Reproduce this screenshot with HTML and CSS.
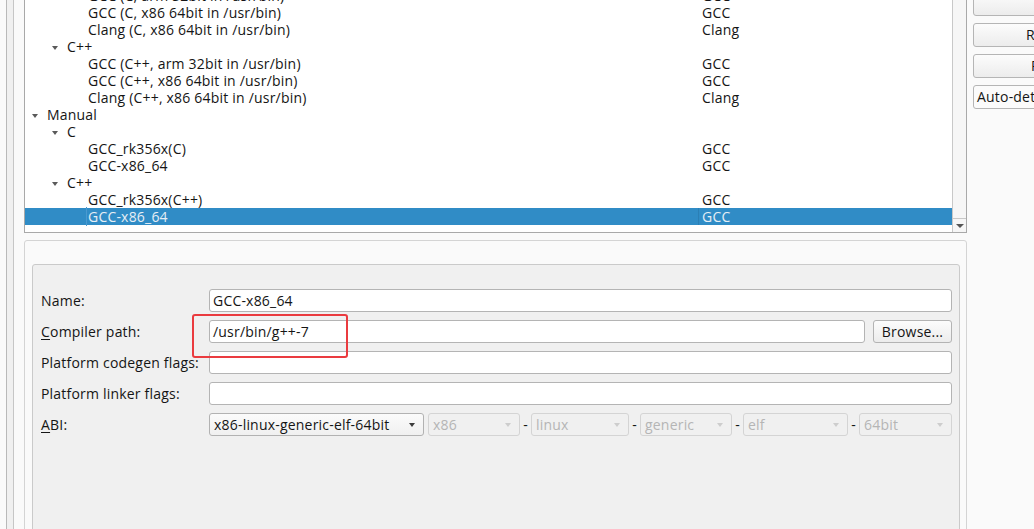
FILE: index.html
```html
<!DOCTYPE html>
<html>
<head>
<meta charset="utf-8">
<link rel="stylesheet" href="styles.css">
</head>
<body>
<div class="shell">
  <div class="edge"></div>
  <div class="main">
    <div class="tree">
      <div class="tree-body">
        <div class="row"><div class="name lvl2">GCC (C, arm 32bit in /usr/bin)</div><div class="type">GCC</div></div>
        <div class="row"><div class="name lvl2">GCC (C, x86 64bit in /usr/bin)</div><div class="type">GCC</div></div>
        <div class="row"><div class="name lvl2">Clang (C, x86 64bit in /usr/bin)</div><div class="type">Clang</div></div>
        <div class="row"><div class="name lvl1"><span class="twisty"></span>C++</div><div class="type"></div></div>
        <div class="row"><div class="name lvl2">GCC (C++, arm 32bit in /usr/bin)</div><div class="type">GCC</div></div>
        <div class="row"><div class="name lvl2">GCC (C++, x86 64bit in /usr/bin)</div><div class="type">GCC</div></div>
        <div class="row"><div class="name lvl2">Clang (C++, x86 64bit in /usr/bin)</div><div class="type">Clang</div></div>
        <div class="row"><div class="name lvl0"><span class="twisty"></span>Manual</div><div class="type"></div></div>
        <div class="row"><div class="name lvl1"><span class="twisty"></span>C</div><div class="type"></div></div>
        <div class="row"><div class="name lvl2">GCC_rk356x(C)</div><div class="type">GCC</div></div>
        <div class="row"><div class="name lvl2">GCC-x86_64</div><div class="type">GCC</div></div>
        <div class="row"><div class="name lvl1"><span class="twisty"></span>C++</div><div class="type"></div></div>
        <div class="row"><div class="name lvl2">GCC_rk356x(C++)</div><div class="type">GCC</div></div>
        <div class="row selected"><div class="name lvl2"><span class="focus">GCC-x86_64</span></div><div class="type">GCC</div></div>
      </div>
      <div class="scrollbar">
        <div class="sb-btn"><span class="sb-arrow"></span></div>
      </div>
    </div>

    <div class="details">
      <div class="group">
        <div class="form">
          <div class="label">Name:</div>
          <div class="field">GCC-x86_64</div>

          <div class="label"><span class="mn">C</span>ompiler path:</div>
          <div class="path-row">
            <div class="field grow">/usr/bin/g++-7</div>
            <div class="btn">Browse...</div>
          </div>

          <div class="label">Platform codegen flags:</div>
          <div class="field"></div>

          <div class="label">Platform linker flags:</div>
          <div class="field"></div>

          <div class="label"><span class="mn">A</span>BI:</div>
          <div class="abi-row">
            <div class="combo w-main"><span>x86-linux-generic-elf-64bit</span><span class="caret"></span></div>
            <div class="combo disabled w-arch"><span>x86</span><span class="caret"></span></div>
            <span class="dash">-</span>
            <div class="combo disabled w-os"><span>linux</span><span class="caret"></span></div>
            <span class="dash">-</span>
            <div class="combo disabled w-flavor"><span>generic</span><span class="caret"></span></div>
            <span class="dash">-</span>
            <div class="combo disabled w-format"><span>elf</span><span class="caret"></span></div>
            <span class="dash">-</span>
            <div class="combo disabled w-width"><span>64bit</span><span class="caret"></span></div>
          </div>
        </div>
      </div>
    </div>
  </div>

  <div class="side">
    <div class="side-btn pad-add">Add</div>
    <div class="side-btn pad-remove">Remove</div>
    <div class="side-btn pad-removeall">Remove All</div>
    <div class="side-btn auto">Auto-detection Settings...</div>
  </div>
</div>
<div class="annot"></div>
</body>
</html>
```

FILE: styles.css
```css
html, body {
  margin: 0;
  padding: 0;
}

body {
  width: 1034px;
  height: 529px;
  overflow: hidden;
  position: relative;
  background: #fafafa;
  font-family: "Open Sans", "DejaVu Sans", sans-serif;
  font-size: 14px;
  letter-spacing: 0.2px;
  color: #151515;
}

.shell {
  display: flex;
  height: 529px;
}

.edge {
  margin-left: 6px;
  width: 6px;
  flex-shrink: 0;
  border-left: 1px solid #b9b9b9;
  border-right: 1px solid #c6c6c6;
  background: #f0f0f0;
}

.main {
  width: 943px;
  margin-left: 10px;
  flex-shrink: 0;
}

/* tree */
.tree {
  margin-top: -14px;
  height: 247px;
  box-sizing: border-box;
  border: 1px solid #a9a9a9;
  background: #fff;
  display: flex;
}

.tree-body {
  flex: 1;
  min-width: 0;
}

.row {
  display: grid;
  grid-template-columns: 673px 1fr;
  height: 17px;
  line-height: 17px;
  white-space: nowrap;
}

.name.lvl0 { padding-left: 23px; }
.name.lvl1 { padding-left: 43px; }
.name.lvl2 { padding-left: 63px; }

.type {
  padding-left: 4px;
}

.twisty {
  display: inline-block;
  width: 0;
  height: 0;
  border-left: 3.5px solid transparent;
  border-right: 3.5px solid transparent;
  border-top: 4px solid #5a5a5a;
  margin-left: -16px;
  margin-right: 9px;
  vertical-align: 2px;
}

.row.selected {
  background: #308cc6;
  color: #e6eef5;
}

.row.selected .type {
  border-left: 1px solid #2b7fb5;
  padding-left: 3px;
}

.focus {
  margin-left: -2px;
  padding-left: 1px;
  border-left: 1px solid #4a9ad0;
}

.scrollbar {
  width: 13px;
  border-left: 1px solid #c8c8c8;
  background: #f6f6f6;
  display: flex;
  flex-direction: column;
  justify-content: flex-end;
}

.sb-btn {
  height: 13px;
  border-top: 1px solid #c8c8c8;
  display: flex;
  align-items: center;
  justify-content: center;
}

.sb-arrow {
  width: 0;
  height: 0;
  border-left: 4px solid transparent;
  border-right: 4px solid transparent;
  border-top: 4px solid #555;
}

/* details */
.details {
  margin-top: 7px;
  height: 320px;
  box-sizing: border-box;
  border: 1px solid #d4d4d4;
  border-radius: 3px;
  padding: 23px 6px 0 7px;
  background: #fafafa;
}

.group {
  border: 1px solid #cacaca;
  border-radius: 3px;
  background: #f0f0f0;
  padding: 24px 7px 200px 8px;
}

.form {
  display: grid;
  grid-template-columns: 168px 1fr;
  grid-auto-rows: 23px;
  row-gap: 8px;
  align-items: center;
}

.label {
  white-space: nowrap;
}

.mn {
  text-decoration: underline;
  text-underline-offset: 2px;
}

.field {
  height: 23px;
  box-sizing: border-box;
  border: 1px solid #b4b4b4;
  border-radius: 3px;
  background: #fff;
  padding-left: 3px;
  line-height: 21px;
}

.path-row {
  display: flex;
  gap: 8px;
}

.grow {
  flex: 1;
}

.btn {
  height: 23px;
  box-sizing: border-box;
  width: 79px;
  border: 1px solid #b3b3b3;
  border-radius: 3px;
  background: linear-gradient(#fcfcfc, #ececec);
  text-align: center;
  line-height: 21px;
}

.abi-row {
  display: flex;
  align-items: center;
}

.combo {
  height: 23px;
  box-sizing: border-box;
  border: 1px solid #b2b2b2;
  border-radius: 3px;
  background: linear-gradient(#fbfbfb, #f0f0f0);
  display: flex;
  align-items: center;
  justify-content: space-between;
  padding: 0 8px 0 4px;
  white-space: nowrap;
}

.combo.disabled {
  border-color: #d4d4d4;
  background: #f0f0f0;
  color: #b5b5b5;
}

.caret {
  width: 0;
  height: 0;
  border-left: 3.5px solid transparent;
  border-right: 3.5px solid transparent;
  border-top: 4px solid #3c3c3c;
}

.combo.disabled .caret {
  border-top-color: #cdcdcd;
}

.w-main { width: 215px; margin-right: 4px; }
.w-arch { width: 92px; }
.w-os { width: 98px; }
.w-flavor { width: 92px; }
.w-format { width: 105px; }
.w-width { width: 93px; }

.dash {
  width: 11px;
  text-align: center;
}

/* side buttons */
.side {
  margin-left: 6px;
  margin-top: -8px;
  width: 170px;
  flex-shrink: 0;
  display: flex;
  flex-direction: column;
  gap: 7px;
}

.side-btn {
  height: 24px;
  box-sizing: border-box;
  border: 1px solid #b5b5b5;
  border-radius: 3px;
  background: linear-gradient(#fcfcfc, #ececec);
  line-height: 22px;
  white-space: nowrap;
}

.pad-add { padding-left: 70px; }
.pad-remove { padding-left: 52px; }
.pad-removeall { padding-left: 57px; }
.side-btn.auto {
  padding-left: 3px;
  background: #fbfbfb;
}

/* annotation overlay */
.annot {
  position: absolute;
  left: 192px;
  top: 314px;
  width: 156px;
  height: 44px;
  box-sizing: border-box;
  border: 2px solid #ea3b3f;
  border-radius: 3px;
}
```
